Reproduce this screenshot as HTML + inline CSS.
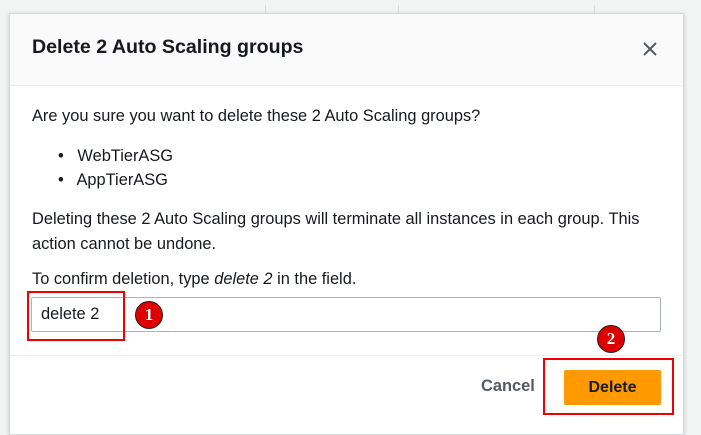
<!DOCTYPE html>
<html><head><style>
body{margin:0;width:701px;height:420px;background:#f2f3f3;position:relative;overflow:hidden;font-family:"Liberation Sans",sans-serif;color:#16191f}
.bg{position:absolute;left:0;top:0;width:701px;height:420px}
.modal{position:absolute;left:9px;top:13px;width:673px;height:420px;background:#fff;border:1px solid #d5dbdb;box-shadow:0 1px 4px rgba(0,0,0,.2)}
.hdr{height:71px;background:#fafafa;border-bottom:1px solid #eaeded}
.t{position:absolute;font-size:16.4px}
.red{position:absolute;border:2px solid #e00;}
.circ{position:absolute;width:26px;height:26px;border-radius:50%;background:#d00;border:1px solid #222;color:#fff;font:bold 17px "Liberation Serif",serif;text-align:center;line-height:26px}
</style></head><body>
<div class="bg">
<div style="position:absolute;left:265px;top:5px;width:1px;height:14px;background:#ddd"></div>
<div style="position:absolute;left:398px;top:5px;width:1px;height:14px;background:#ddd"></div>
<div style="position:absolute;left:594px;top:5px;width:1px;height:14px;background:#ddd"></div>
</div>
<div class="modal"><div class="hdr"></div></div>
<div class="t" style="left:32px;top:36px;font-size:19.6px;font-weight:bold">Delete 2 Auto Scaling groups</div>
<svg style="position:absolute;left:642px;top:41px" width="16" height="16"><path d="M2 2L14 14M14 2L2 14" stroke="#545b64" stroke-width="2"/></svg>
<div class="t" style="left:32px;top:107px">Are you sure you want to delete these 2 Auto Scaling groups?</div>
<div class="t" style="left:58px;top:147px">•&nbsp;&nbsp; WebTierASG</div>
<div class="t" style="left:58px;top:171px">•&nbsp;&nbsp; AppTierASG</div>
<div class="t" style="left:32px;top:207px;line-height:25px">Deleting these 2 Auto Scaling groups will terminate all instances in each group. This<br>action cannot be undone.</div>
<div class="t" style="left:32px;top:270px">To confirm deletion, type <i>delete 2</i> in the field.</div>
<div style="position:absolute;left:31px;top:297px;width:628px;height:33px;border:1px solid #aab7b8;border-radius:2px"></div>
<div class="t" style="left:41px;top:305px">delete 2</div>
<div class="red" style="left:27px;top:291px;width:94px;height:46px"></div>
<div class="circ" style="left:135px;top:301px">1</div>
<div style="position:absolute;left:10px;top:355px;width:672px;height:1px;background:#eaeded"></div>
<div class="t" style="left:481px;top:377px;font-weight:bold;color:#545b64">Cancel</div>
<div style="position:absolute;left:564px;top:370px;width:97px;height:35px;background:#ff9900;border-radius:2px;font-weight:bold;font-size:16px;text-align:center;line-height:35px">Delete</div>
<div class="red" style="left:543px;top:358px;width:127px;height:53px"></div>
<div class="circ" style="left:597px;top:325px">2</div>
</body></html>
